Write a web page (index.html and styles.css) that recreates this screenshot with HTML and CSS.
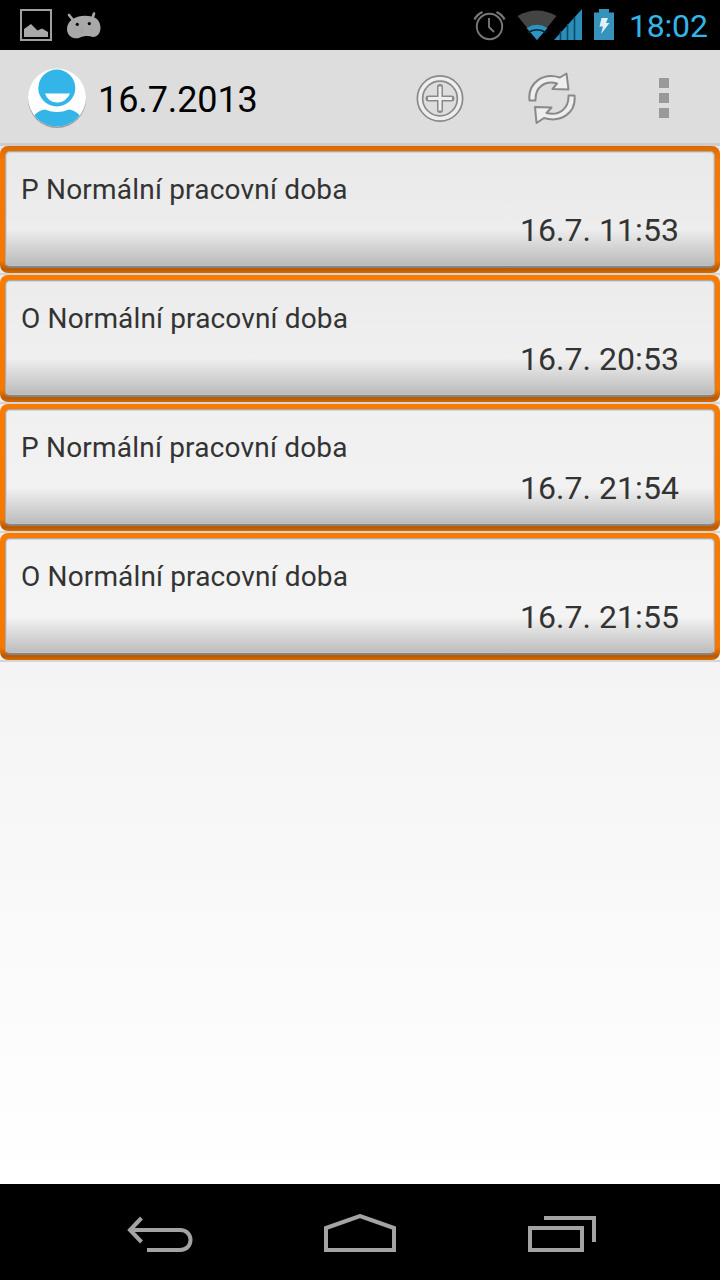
FILE: index.html
```html
<!DOCTYPE html>
<html lang="cs">
<head>
<meta charset="utf-8">
<title>16.7.2013</title>
<link rel="stylesheet" href="styles.css">
</head>
<body>
<div class="screen">
  <header class="status">
    <div class="status-left">
      <svg width="32" height="32" viewBox="0 0 32 32"><rect x="1" y="1" width="30" height="30" fill="none" stroke="#a0a0a0" stroke-width="2"/><path d="M4 28V20L11 15L17.500 21.500L22 19.500L28 23V28Z" fill="#a8a8a8"/></svg>
      <svg class="droid" width="36" height="28" viewBox="0 0 36 28"><path d="M3 4L7 9M28 2.500L26.500 7" stroke="#a8a8a8" stroke-width="2.600" stroke-linecap="round"/><path d="M6 8.500C12 3.500 25 3.500 31 8C37 14 35 26 27 26C22 24.500 18 25 14 26.500C9 29 1 26 1 18C1 14 3 10.500 6 8.500Z" fill="#a8a8a8"/><circle cx="11.300" cy="13.300" r="1.600"/><circle cx="23.300" cy="12.600" r="1.600"/><path d="M15 18h1M15 21h1M17 19.500h1" stroke="#888"/></svg>
    </div>
    <div class="status-right">
      <svg class="alarm" width="34" height="32" viewBox="0 0 34 32" fill="none" stroke="#777" stroke-width="1.900"><circle cx="16.500" cy="17.500" r="12.700"/><path d="M16 9V18L21 23"/><path d="M1.500 10.500Q4 5.500 9.500 3M31.500 10.500Q29 5.500 23.500 3" stroke-width="2.300"/></svg>
      <svg class="wifi" width="40" height="32" viewBox="0 0 40 32"><path d="M20 31L.5 7Q20-4 39.500 7Z" fill="#444"/><path d="M20 31L9.500 19Q20 12.500 30.500 19Z" fill="#2b94c0"/><path d="M11 23.500Q20 18 29 23.500" fill="none" stroke="#082330" stroke-width="1.600"/></svg>
      <svg class="signal" width="28" height="32" viewBox="0 0 28 32"><path d="M0 31L28 0V31Z" fill="#2b8db8"/><path d="M6.500 22V31M13.500 15V31M20.500 8V31" stroke="#0b4a65" stroke-width="1.600"/></svg>
      <svg class="battery" width="20" height="32" viewBox="0 0 20 32"><path d="M0 3.500H5V0H15V3.500H20V31H0Z" fill="#3693bb"/><path d="M7.500 9H14L12 14H15.500L7 25L9 17.500H5.500Z" fill="#e0f1f7"/></svg>
      <span class="clock">18:02</span>
    </div>
  </header>
  <nav class="action-bar">
    <svg class="avatar" width="62" height="62" viewBox="0 0 62 62"><defs><clipPath id="disc"><circle cx="31" cy="31" r="28.500"/></clipPath></defs><circle cx="31" cy="32" r="29" fill="#999"/><circle cx="31" cy="30.500" r="29" fill="#fff"/><path d="M7 50Q12 43 19 42.500Q31 47.500 43 42.500Q50 43 55 50V61H7Z" fill="#33b5e9" clip-path="url(#disc)"/><circle cx="30.800" cy="21" r="18.500" fill="#33b5e9"/><path d="M19 26.500H44Q40 35.500 31.500 35.500Q22 35.500 19 26.500Z" fill="#fff"/></svg>
    <h1 class="title">16.7.2013</h1>
    <div class="actions">
      <svg width="48" height="50" viewBox="0 0 48 50" fill="none"><circle cx="24" cy="25.500" r="20" stroke="#898989" stroke-width="7"/><circle cx="24" cy="25.500" r="20" stroke="#eee" stroke-width="3.600"/><path d="M24 14V37M12.500 25.500H35.500" stroke="#898989" stroke-width="6" stroke-linecap="round"/><path d="M24 13.500V37.500M12 25.500H36" stroke="#eee" stroke-width="3"/></svg>
      <svg width="48" height="52" viewBox="0 0 48 52" fill="#eee" stroke="#898989" stroke-width="2" stroke-linejoin="round"><path d="M1.500 28.500C-.5 11 15 0 32 5.500L38.500 1.500L40.500 17.500L24.500 17L29 11.500C17 8 7 15 7.500 28.500Z"/><path d="M46.500 23.500C48.500 41 33 51 16 46L8.500 51L7 35L23.500 35.500L18.500 41C31 44 41 37 40.500 23.500Z"/></svg>
      <div class="overflow"><i></i><i></i><i></i></div>
    </div>
  </nav>
  <main class="list">
    <div class="row"><div class="card shade-1"><div class="face"><span class="name name-p">P Normální pracovní doba</span><span class="time">16.7. 11:53</span></div></div></div>
    <div class="row"><div class="card shade-2"><div class="face"><span class="name">O Normální pracovní doba</span><span class="time">16.7. 20:53</span></div></div></div>
    <div class="row"><div class="card shade-3"><div class="face"><span class="name name-p">P Normální pracovní doba</span><span class="time">16.7. 21:54</span></div></div></div>
    <div class="row"><div class="card shade-4"><div class="face"><span class="name">O Normální pracovní doba</span><span class="time">16.7. 21:55</span></div></div></div>
  </main>
  <footer class="nav-bar">
    <svg width="68" height="40" viewBox="0 0 68 40" fill="none" stroke="#a3a3a3" stroke-width="4"><path d="M3 16H54C68 16 68 36 54 36H21M15.500 4L4 16L15.500 28"/></svg>
    <svg class="home" width="72" height="40" viewBox="0 0 72 40" fill="none" stroke="#a3a3a3" stroke-width="4"><path d="M2 36V14L36 2L70 14V36Z"/></svg>
    <svg width="68" height="40" viewBox="0 0 68 40" fill="none" stroke="#a3a3a3" stroke-width="4"><path d="M2 14H54V36H2ZM16 4H66V28"/></svg>
  </footer>
</div>
</body>
</html>
```
FILE: styles.css
```css
* { box-sizing: border-box; }
body { margin: 0; font-family: Roboto, "Noto Sans", sans-serif; }
svg { display: block; flex: none; }
.screen { width: 720px; height: 1280px; display: flex; flex-direction: column; overflow: hidden; }
.status { height: 50px; flex: none; background: #000; display: flex; justify-content: space-between; padding: 9px 12px 0 20px; }
.status-left, .status-right { display: flex; align-items: flex-start; }
.droid { margin: 2px 0 0 14px; }
.wifi { margin-left: 10px; }
.signal { margin-left: -3px; }
.battery { margin-left: 12px; }
.clock { width: 79px; margin-left: 15px; color: #33b5e5; font-size: 32px; line-height: 36px; margin-top: -1px; letter-spacing: -.2px; white-space: nowrap; }
.action-bar { height: 96px; flex: none; background: #ddd; border-bottom: 3px solid #ccc; display: flex; align-items: center; padding: 3px 51px 0 26px; }
.title { margin: 4px 0 0 10px; font-size: 36px; font-weight: 400; line-height: 42px; letter-spacing: -.1px; white-space: nowrap; }
.actions { margin-left: auto; display: flex; align-items: center; }
.actions svg + svg { margin-left: 64px; }
.overflow { margin-left: 83px; display: grid; gap: 5px; }
.overflow i { width: 10px; height: 10px; background: #999; }
.list { flex: 1; background: linear-gradient(#e8e8e8, #f4f4f4 50%, #fff); }
.row { height: 129px; border-bottom: 2px solid #d5d5d5; }
.card { height: 127px; padding: 5px; border-radius: 8px; background: linear-gradient(#f97c00, #f57900 90%, #b95a00 97%, #d86a00); }
.face { height: 117px; border: 1px solid #aaa; border-bottom: 2px solid #858585; border-radius: 5px; display: flex; flex-direction: column; padding: 21px 35px 0 15px; color: #333; box-shadow: inset 0 0 0 1px rgba(200, 200, 200, .6); }
.shade-1 { background: linear-gradient(#dc6900, #f57900 12%, #f57900 90%, #b95a00 97%, #d86a00); }
.shade-1 .face { background: linear-gradient(#e9e9e9, #ededed 68%, #b9b9b9); }
.shade-2 .face { background: linear-gradient(#ececec, #efefef 68%, #bababa); }
.shade-3 .face { background: linear-gradient(#f0f0f0, #f2f2f2 68%, #bbb); }
.shade-4 .face { background: linear-gradient(#f2f2f2, #f4f4f4 68%, #bcbcbc); }
.name { font-size: 28px; line-height: 34px; letter-spacing: .15px; white-space: nowrap; }
.name-p { letter-spacing: .2px; }
.time { font-size: 32px; line-height: 38px; margin-top: 4px; align-self: flex-end; letter-spacing: .05px; white-space: nowrap; }
.nav-bar { height: 96px; flex: none; background: #000; display: flex; padding: 30px 124px 0 126px; justify-content: space-between; }
.home { margin-left: -2px; }
```
